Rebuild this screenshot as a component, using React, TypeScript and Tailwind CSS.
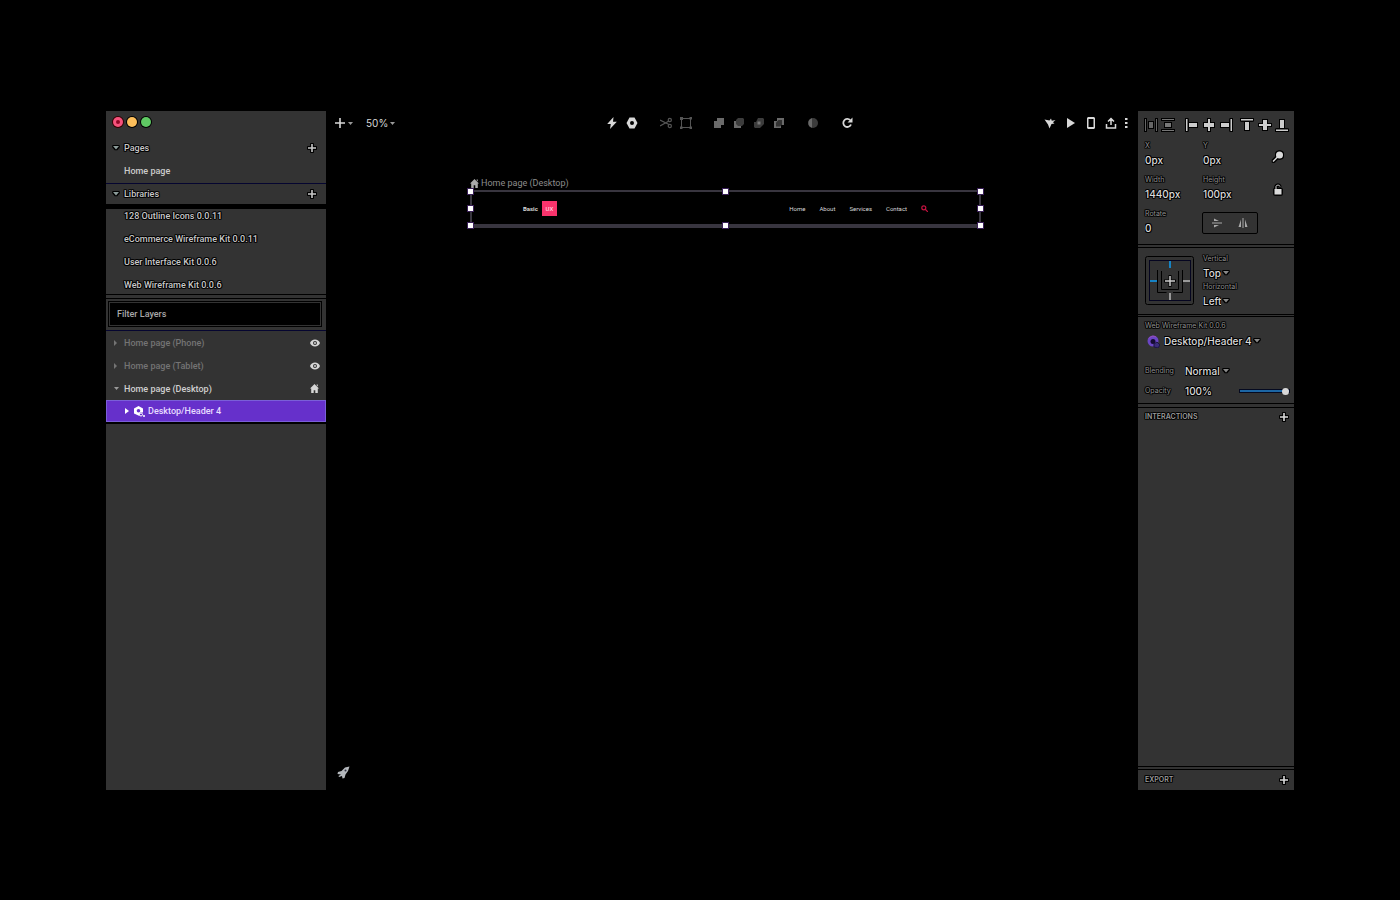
import { ReactNode, useState } from 'react';

const halo =
  '[text-shadow:1px_0_#000,-1px_0_#000,0_1px_#000,0_-1px_#000,1px_1px_#111,-1px_-1px_#111,1px_-1px_#111,-1px_1px_#111]';
const iconHalo =
  '[filter:drop-shadow(1px_0_0_#000)_drop-shadow(-1px_0_0_#000)_drop-shadow(0_1px_0_#000)_drop-shadow(0_-1px_0_#000)]';

const libraries = [
  '128 Outline Icons 0.0.11',
  'eCommerce Wireframe Kit 0.0.11',
  'User Interface Kit 0.0.6',
  'Web Wireframe Kit 0.0.6',
];

const navLinks = ['Home', 'About', 'Services', 'Contact'];

const handles = [
  '-left-[4px] -top-[3px]',
  'left-1/2 -ml-[3px] -top-[3px]',
  '-right-[4px] -top-[3px]',
  '-left-[4px] top-1/2 -mt-[2px]',
  '-right-[4px] top-1/2 -mt-[2px]',
  '-left-[4px] -bottom-[4px]',
  'left-1/2 -ml-[3px] -bottom-[4px]',
  '-right-[4px] -bottom-[4px]',
];

type IconProps = {
  children: ReactNode;
  className?: string;
  w?: number;
  h?: number;
};

function Icon({ children, className = '', w = 12, h = 12 }: IconProps) {
  return (
    <svg
      width={w}
      height={h}
      viewBox={`0 0 ${w} ${h}`}
      fill="currentColor"
      className={`shrink-0 ${className}`}
      aria-hidden="true"
    >
      {children}
    </svg>
  );
}

function Caret({ className = '' }: { className?: string }) {
  return (
    <Icon w={6} h={4} className={className}>
      <path d="M0 0h6L3 3.5z" />
    </Icon>
  );
}

function Plus({ className = '' }: { className?: string }) {
  return (
    <Icon w={8} h={8} className={className}>
      <path d="M3.2 0h1.600v3.200H8v1.600H4.800V8H3.200V4.800H0V3.200h3.200z" />
    </Icon>
  );
}

function House({ className = '' }: { className?: string }) {
  return (
    <Icon w={9} h={9} className={className}>
      <path d="M4.5 0L9 4.6H7.8V9H5.3V6.2H3.7V9H1.2V4.6H0zM6.6.4h1.2v2L6.6 1.2z" />
    </Icon>
  );
}

function Eye() {
  return (
    <Icon w={10} h={8}>
      <path
        fillRule="evenodd"
        d="M5 .5C2.700.5.8 2 0 4c.8 2 2.700 3.500 5 3.500S9.200 6 10 4C9.200 2 7.300.5 5 .5zM5 6a2 2 0 110-4 2 2 0 010 4z"
      />
      <circle cx="5" cy="4" r="1" />
    </Icon>
  );
}

function SectionHeader({ title }: { title: string }) {
  return (
    <div className="flex items-center h-5 pl-[7px] pr-[10px] text-[#c8c8c8]">
      <button aria-label={`Collapse ${title}`} className="w-[11px]">
        <Caret className={`text-[#8c9c9a] ${iconHalo}`} />
      </button>
      <h2 className={`flex-1 text-[9px] ${halo}`}>{title}</h2>
      <button aria-label={`Add to ${title}`}>
        <Plus className={iconHalo} />
      </button>
    </div>
  );
}

function LayerRow({ name, open = false }: { name: string; open?: boolean }) {
  return (
    <li
      className={`flex items-center h-[23px] pl-2 pr-[6px] ${open ? 'text-[#d0d0d0]' : 'text-[#747474]'}`}
    >
      <button aria-label={`Toggle ${name}`} className="w-[10px]">
        {open ? (
          <Icon w={5} h={4} className="text-[#999]">
            <path d="M0 0h5L2.500 3z" />
          </Icon>
        ) : (
          <Icon w={4} h={6}>
            <path d="M0 0l3 3-3 3z" />
          </Icon>
        )}
      </button>
      <span className="flex-1">{name}</span>
      <button aria-label={`Visibility of ${name}`} className="text-[#d6d6d6]">
        {open ? <House className="mr-px" /> : <Eye />}
      </button>
    </li>
  );
}

function Sidebar() {
  return (
    <aside className="flex flex-col w-[220px] shrink-0 bg-[#333] font-['Roboto','Liberation_Sans',sans-serif] font-medium text-[9px] leading-[14px] text-[#c8c8c8]">
      <div className="flex items-center gap-1 h-[22px] pl-[7px]">
        <button
          aria-label="Close"
          className="flex items-center justify-center size-[10px] rounded-full bg-[#f6527c] shadow-[0_0_0_1px_#300]"
        >
          <span className="size-1 rounded-full bg-[#900826]" />
        </button>
        <button
          aria-label="Minimize"
          className="size-[10px] rounded-full bg-[#fdbf5b] shadow-[0_0_0_1px_#000]"
        />
        <button
          aria-label="Zoom"
          className="size-[10px] rounded-full bg-[#5fc963] shadow-[0_0_0_1px_#000]"
        />
      </div>

      <div className="pt-[5px]">
        <SectionHeader title="Pages" />
        <a href="#home" className="block pl-[18px] pt-[6px] pb-[5px] text-[#ccc]">
          Home page
        </a>
      </div>

      <div className="border-t border-[#050530]">
        <SectionHeader title="Libraries" />
      </div>
      <ul
        className={`flex flex-col gap-[9px] pl-[18px] pb-[2px] border-t-[5px] border-b border-black ${halo}`}
      >
        {libraries.map((name) => (
          <li key={name}>{name}</li>
        ))}
      </ul>

      <div className="mt-[3px] pl-[2px] pr-1 pt-[2px] pb-[3px] border-t border-b border-t-black border-b-[#050530]">
        <div className="p-px border border-black">
          <input
            type="text"
            aria-label="Filter Layers"
            placeholder="Filter Layers"
            className="block w-full h-[22px] px-[7px] bg-black text-[9px] outline-none placeholder:text-[#a8a8a8]"
          />
        </div>
      </div>

      <ul>
        <LayerRow name="Home page (Phone)" />
        <LayerRow name="Home page (Tablet)" />
        <LayerRow name="Home page (Desktop)" open />
        <li className="flex items-center h-[22px] pl-[17px] border border-[#7a5fd8] bg-[#6630cb] text-[#e6dcff]">
          <button aria-label="Toggle Desktop/Header 4" className="w-[10px]">
            <Icon w={5} h={6} className="text-white">
              <path d="M1 0l4 3-4 3z" />
            </Icon>
          </button>
          <Icon w={11} h={11} className="mr-[3px] text-white">
            <path
              fillRule="evenodd"
              d="M4.500 0L9 2.500v4H6L5.500 10 0 7.500v-5zM4.500 3a1.800 1.800 0 100 3.600A1.800 1.800 0 004.500 3z"
            />
            <circle cx="7" cy="8.500" r="1.500" fill="none" stroke="currentColor" />
            <circle cx="10" cy="10" r="1" />
          </Icon>
          Desktop/Header 4
        </li>
      </ul>
      <div className="border-t-[2px] border-black" />
    </aside>
  );
}

function Toolbar() {
  return (
    <header className="flex items-center h-6 pl-[9px] pr-[10px] text-[#d8d8d8]">
      <div className="flex flex-1 items-center">
        <button aria-label="Insert" className="flex items-center gap-[3px]">
          <Icon w={10} h={10}>
            <path d="M4.200 0h1.600v4.200H10v1.600H5.800V10H4.200V5.800H0V4.200h4.200z" />
          </Icon>
          <Icon w={5} h={3} className="text-[#999]">
            <path d="M0 0h5L2.500 3z" />
          </Icon>
        </button>
        <button className="flex items-center gap-[2px] ml-[13px] text-[10px]">
          50%
          <Icon w={5} h={3} className="text-[#999]">
            <path d="M0 0h5L2.500 3z" />
          </Icon>
        </button>
      </div>

      <div className="flex items-center gap-2 pr-1">
        <button aria-label="Actions">
          <Icon>
            <path d="M7.500 0L1.200 7h3.600L4 12l6.800-7.200H7z" />
          </Icon>
        </button>
        <button aria-label="Component">
          <Icon>
            <path
              fillRule="evenodd"
              d="M3.500.5h5L11.500 6l-3 5.500h-5L.5 6zM6 4a2 2 0 100 4 2 2 0 000-4z"
            />
          </Icon>
        </button>
        <button aria-label="Scissors" className="ml-[14px] text-[#555]">
          <Icon>
            <g fill="none" stroke="currentColor" strokeWidth="1.200">
              <path d="M0 3l9 4.500M0 9l9-5" />
              <circle cx="9.800" cy="3" r="1.600" />
              <circle cx="9.800" cy="9" r="1.600" />
            </g>
          </Icon>
        </button>
        <button aria-label="Transform" className="text-[#555]">
          <Icon>
            <path d="M1.500 1.500h9v9h-9z" fill="none" stroke="currentColor" />
            <path d="M0 0h3v3H0zM9.500 0H12v2.500H9.500zM0 9.500h2.500V12H0zM9.500 9.500H12V12H9.500z" />
          </Icon>
        </button>
        <button aria-label="Union" className="ml-[13px] text-[#6a6a6a]">
          <Icon>
            <path d="M4 1h7v7H8v3H1V4h3z" />
          </Icon>
        </button>
        <button aria-label="Subtract">
          <Icon>
            <path d="M1 4h3v4h4v3H1z" fill="#6a6a6a" />
            <path d="M5 1h5l1 1v5L9 9H5L3 7V3z" fill="#3c3c3c" />
          </Icon>
        </button>
        <button aria-label="Intersect">
          <Icon>
            <path d="M5 1h5l1 1v5L7 11H2l-1-1V5h2z" fill="#3c3c3c" />
            <path d="M4.500 4.500h3v3h-3z" fill="#777" />
          </Icon>
        </button>
        <button aria-label="Difference">
          <Icon>
            <path d="M4 1h7v7H8v3H1V4h3z" fill="#6a6a6a" />
            <path d="M5.500 3H9v4.500L7 9.500H3V5.500z" fill="#333" />
          </Icon>
        </button>
        <button aria-label="Mask" className="ml-[14px]">
          <Icon>
            <circle cx="6" cy="6" r="5" fill="#3c3c3c" />
            <path d="M5 1.200a5 5 0 000 9.600z" fill="#6a6a6a" />
          </Icon>
        </button>
        <button aria-label="Refresh" className="ml-[14px]">
          <Icon>
            <path
              d="M9.200 3.200A4 4 0 1010 7.500"
              fill="none"
              stroke="currentColor"
              strokeWidth="1.800"
            />
            <path d="M11.500.5v5h-5z" />
          </Icon>
        </button>
      </div>

      <div className="flex flex-1 items-center justify-end">
        <button aria-label="Inspect" className="mr-[9px]">
          <Icon>
            <path d="M.5 2.500l5 1L7 1.500l.8 2.200L11.500 3 9 5.200l1.500 1.300L7.500 7 5.500 11.500 4 7.500z" />
          </Icon>
        </button>
        <button aria-label="Preview" className="mr-[8px]">
          <Icon>
            <path d="M2 1l8 5-8 5z" />
          </Icon>
        </button>
        <button aria-label="Mirror" className="mr-[8px]">
          <Icon>
            <path
              fillRule="evenodd"
              d="M3 0h6l1 1v10l-1 1H3l-1-1V1zM3.500 2v8h5V2z"
            />
          </Icon>
        </button>
        <button aria-label="Share" className="mr-[8px]">
          <Icon>
            <path
              d="M1.500 7v4h9V7M6 8V2M3 4.500l3-3 3 3"
              fill="none"
              stroke="currentColor"
              strokeWidth="1.500"
            />
          </Icon>
        </button>
        <button aria-label="More">
          <Icon w={3} h={12}>
            <path d="M0 1h2.500v2H0zM0 5h2.500v2H0zM0 9h2.500v2H0z" />
          </Icon>
        </button>
      </div>
    </header>
  );
}

function Canvas() {
  return (
    <main className="flex flex-col flex-1 min-w-0">
      <Toolbar />
      <div className="ml-[144px] mr-[157px] mt-[42px] font-['Roboto','Liberation_Sans',sans-serif]">
        <div className="flex items-center gap-[2px] h-[13px] text-[9px] text-[#8c8c8c]">
          <House className="text-[#aaa]" />
          Home page (Desktop)
        </div>
        <div className="relative flex items-center justify-between h-[38px] px-[51px] border-2 border-b-4 border-[#38353f] text-[6px] text-[#d8d8d8]">
          <div className="flex items-center gap-1 text-[6px] font-bold">
            Basic
            <span className="flex items-center justify-center size-[15px] bg-[#f9336c] font-medium text-[#ffd0dd]">
              UX
            </span>
          </div>
          <nav className="flex items-center gap-[14px]">
            {navLinks.map((link) => (
              <a key={link} href={`#${link.toLowerCase()}`}>
                {link}
              </a>
            ))}
            <button aria-label="Search" className="text-[#c41240]">
              <Icon w={7} h={7}>
                <circle
                  cx="2.800"
                  cy="2.800"
                  r="2"
                  fill="none"
                  stroke="currentColor"
                  strokeWidth="1.200"
                />
                <path d="M4 4l3 3" stroke="currentColor" strokeWidth="1.200" />
              </Icon>
            </button>
          </nav>
          {handles.map((place) => (
            <span
              key={place}
              className={`absolute size-[5px] bg-white shadow-[0_0_0_1px_#3a2058] ${place}`}
            />
          ))}
        </div>
      </div>
      <div className="mt-auto pl-[11px] pb-[11px]">
        <button aria-label="What is new" className="block">
          <Icon w={13} h={13}>
            <path
              d="M12.500.5L8 1.500 4.500 5 1 6l-.5 2L4 8.500 1.500 10l.5 1 3-1 .5 2.500 2-.5 1-3.500L11 5z"
              fill="#b4b8bc"
            />
            <circle cx="8.500" cy="4.500" r="1" fill="#334" />
          </Icon>
        </button>
      </div>
    </main>
  );
}

type FieldProps = { label: string; value: string };

function Field({ label, value }: FieldProps) {
  return (
    <label className="block">
      <span className="block text-[7px] leading-[14px] text-[#909090]">
        {label}
      </span>
      <input
        defaultValue={value}
        className={`block w-full h-[14px] text-[10px] font-medium text-[#dadada] outline-none ${halo}`}
      />
    </label>
  );
}

function Picker({ label, value }: FieldProps) {
  return (
    <label className="block">
      <span className="block text-[7px] leading-[14px] text-[#909090]">
        {label}
      </span>
      <span className="flex items-center gap-[2px]">
        <select
          defaultValue={value}
          className={`appearance-none [field-sizing:content] h-[14px] text-[10px] font-medium text-[#dadada] outline-none ${halo}`}
        >
          <option>{value}</option>
        </select>
        <Caret className={`text-[#888] ${iconHalo}`} />
      </span>
    </label>
  );
}

function AlignBar() {
  return (
    <div className="flex justify-between items-center pt-2 pl-[7px] pr-[6px] text-[#ccc]">
      <button aria-label="Distribute horizontally" className="text-[#666]">
        <Icon className={iconHalo}>
          <path d="M0 0h1v12H0zM11 0h1v12h-1zM4 3h4v6H4z" />
        </Icon>
      </button>
      <button aria-label="Distribute vertically" className="text-[#777]">
        <Icon className={iconHalo}>
          <path d="M0 0h12v1H0zM0 11h12v1H0zM3 4h6v4H3z" />
        </Icon>
      </button>
      <button aria-label="Align left" className="ml-[6px]">
        <Icon className={iconHalo}>
          <path d="M0 0h1.500v12H0zM3 4h8v4H3z" />
        </Icon>
      </button>
      <button aria-label="Align center">
        <Icon className={iconHalo}>
          <path d="M5 0h2v12H5zM1 4h10v4H1z" />
        </Icon>
      </button>
      <button aria-label="Align right">
        <Icon className={iconHalo}>
          <path d="M10.500 0H12v12h-1.500zM1 4h8v4H1z" />
        </Icon>
      </button>
      <button aria-label="Align top" className="ml-1">
        <Icon className={iconHalo}>
          <path d="M0 0h12v1.500H0zM4 3h4v8H4z" />
        </Icon>
      </button>
      <button aria-label="Align middle">
        <Icon className={iconHalo}>
          <path d="M0 5h12v2H0zM4 1h4v10H4z" />
        </Icon>
      </button>
      <button aria-label="Align bottom">
        <Icon className={iconHalo}>
          <path d="M0 10.500h12V12H0zM4 1h4v8H4z" />
        </Icon>
      </button>
    </div>
  );
}

function Constraints() {
  return (
    <svg
      width="50"
      height="50"
      viewBox="0 0 50 50"
      fill="none"
      className="shrink-0"
      aria-hidden="true"
    >
      <rect x=".5" y=".5" width="48" height="48" rx="2" stroke="#000" />
      <rect x="4.500" y="4.500" width="41" height="40" stroke="#050520" />
      <path d="M12.500 14v22.500h9M28 36.500h9.500V14M16.500 15v18.500h17V15" stroke="#000" />
      <path d="M25 5v7" stroke="#1783c4" strokeWidth="2" />
      <path d="M5 25h7" stroke="#1783c4" strokeWidth="2" />
      <path d="M38 25h7M25 37v7" stroke="#999" strokeWidth="2" />
      <path d="M25 19v12M19 25h12" stroke="#000" strokeWidth="3" />
      <path d="M25 20v10M20 25h10" stroke="#ccc" strokeWidth="1.500" />
    </svg>
  );
}

function Inspector() {
  const [opacity, setOpacity] = useState(100);

  return (
    <aside
      className={`flex flex-col w-[156px] shrink-0 bg-[#333] text-[#dadada] ${halo}`}
    >
      <section className="h-[134px] border-b border-black">
        <AlignBar />
        <div className="grid grid-cols-[58px_58px_1fr] gap-y-[6px] pl-[7px] pt-2">
          <Field label="X" value="0px" />
          <Field label="Y" value="0px" />
          <button aria-label="Find" className="justify-self-center mt-2 ml-px">
            <Icon className={iconHalo}>
              <circle cx="7.500" cy="4" r="3.500" />
              <path d="M5.500 6L1 10.500" stroke="currentColor" strokeWidth="1.500" />
            </Icon>
          </button>
          <Field label="Width" value="1440px" />
          <Field label="Height" value="100px" />
          <button aria-label="Lock ratio" className="justify-self-center mt-1 ml-px">
            <Icon w={8} h={11} className={iconHalo}>
              <path d="M.5 5h7v5.500h-7z" />
              <path
                d="M2 5V2.500C2 1 5.500.5 6 2.500"
                fill="none"
                stroke="currentColor"
              />
            </Icon>
          </button>
          <Field label="Rotate" value="0" />
          <div className="flex items-center justify-between w-14 h-[22px] -ml-px mt-[5px] border border-black rounded-[2px] px-[9px] text-[#aaa]">
            <button aria-label="Flip vertical">
              <Icon w={10} h={10}>
                <path d="M0 4.500h10v1H0zM2 .5l5 2.500H2zM2 9.500L7 7H2z" />
              </Icon>
            </button>
            <button aria-label="Flip horizontal">
              <Icon w={10} h={10}>
                <path d="M4.500 0h1v10h-1zM3 1.500V9H.5zM7 1.500V9h2.500z" />
              </Icon>
            </button>
          </div>
        </div>
      </section>

      <section className="flex gap-2 h-[68px] mt-[2px] border-y border-black pl-[7px]">
        <div className="pt-2">
          <Constraints />
        </div>
        <div className="pt-1">
          <Picker label="Vertical" value="Top" />
          <Picker label="Horizontal" value="Left" />
        </div>
      </section>

      <section className="h-[88px] mt-px border-y border-black pl-[7px] pr-[5px]">
        <p className="pt-[2px] text-[7px] leading-[14px] text-[#909090]">
          Web Wireframe Kit 0.0.6
        </p>
        <div className="flex items-center h-4">
          <Icon w={13} h={13} className="ml-[2px] mr-1">
            <circle cx="6" cy="6" r="5.500" fill="#6a45c4" />
            <path d="M2 3.500a5 5 0 017-1.500" stroke="#9a4fb8" fill="none" />
            <circle cx="6" cy="6.500" r="2.500" fill="#150c33" />
            <path d="M7 9l3-2 3 3-2 3-4-1z" fill="#3a2c78" stroke="#1d1545" />
          </Icon>
          <select
            aria-label="Component"
            className={`appearance-none [field-sizing:content] text-[10px] font-medium outline-none ${halo}`}
          >
            <option>Desktop/Header 4</option>
          </select>
          <Caret className={`ml-[2px] text-[#888] ${iconHalo}`} />
        </div>
        <div className="grid grid-cols-[40px_1fr] items-center auto-rows-[20px] pt-3">
          <label htmlFor="blending" className="text-[7px] text-[#909090]">
            Blending
          </label>
          <div className="flex items-center gap-[3px]">
            <select
              id="blending"
              className={`appearance-none [field-sizing:content] text-[10px] font-medium outline-none ${halo}`}
            >
              <option>Normal</option>
            </select>
            <Caret className={`text-[#888] ${iconHalo}`} />
          </div>
          <label htmlFor="opacity" className="text-[7px] text-[#909090]">
            Opacity
          </label>
          <div className="flex items-center justify-between text-[10px] font-medium">
            {opacity}%
            <input
              id="opacity"
              type="range"
              value={opacity}
              onChange={(e) => setOpacity(Number(e.target.value))}
              className="appearance-none w-[49px] h-[2px] bg-[#1c66a4] shadow-[0_0_0_1px_#050a20] [&::-webkit-slider-thumb]:appearance-none [&::-webkit-slider-thumb]:size-[7px] [&::-webkit-slider-thumb]:rounded-full [&::-webkit-slider-thumb]:bg-[#d8d8d8]"
            />
          </div>
        </div>
      </section>

      <section className="flex-1 mt-[3px] border-y border-black">
        <div className="flex items-center justify-between h-[18px] pl-[7px] pr-[6px]">
          <h3 className="text-[7px] leading-[10px] font-semibold text-[#9a9a9a]">
            INTERACTIONS
          </h3>
          <button aria-label="Add interaction">
            <Plus className={iconHalo} />
          </button>
        </div>
      </section>

      <section className="flex items-center justify-between h-[21px] mt-[2px] border-t border-black pl-[7px] pr-[6px]">
        <h3 className="text-[7px] leading-[10px] font-semibold text-[#9a9a9a]">
          EXPORT
        </h3>
        <button aria-label="Add export">
          <Plus className={iconHalo} />
        </button>
      </section>
    </aside>
  );
}

export default function App() {
  return (
    <div className="flex min-h-screen bg-black px-[106px] pt-[111px] pb-[110px] font-['Inter','Liberation_Sans',sans-serif]">
      <Sidebar />
      <Canvas />
      <Inspector />
    </div>
  );
}
